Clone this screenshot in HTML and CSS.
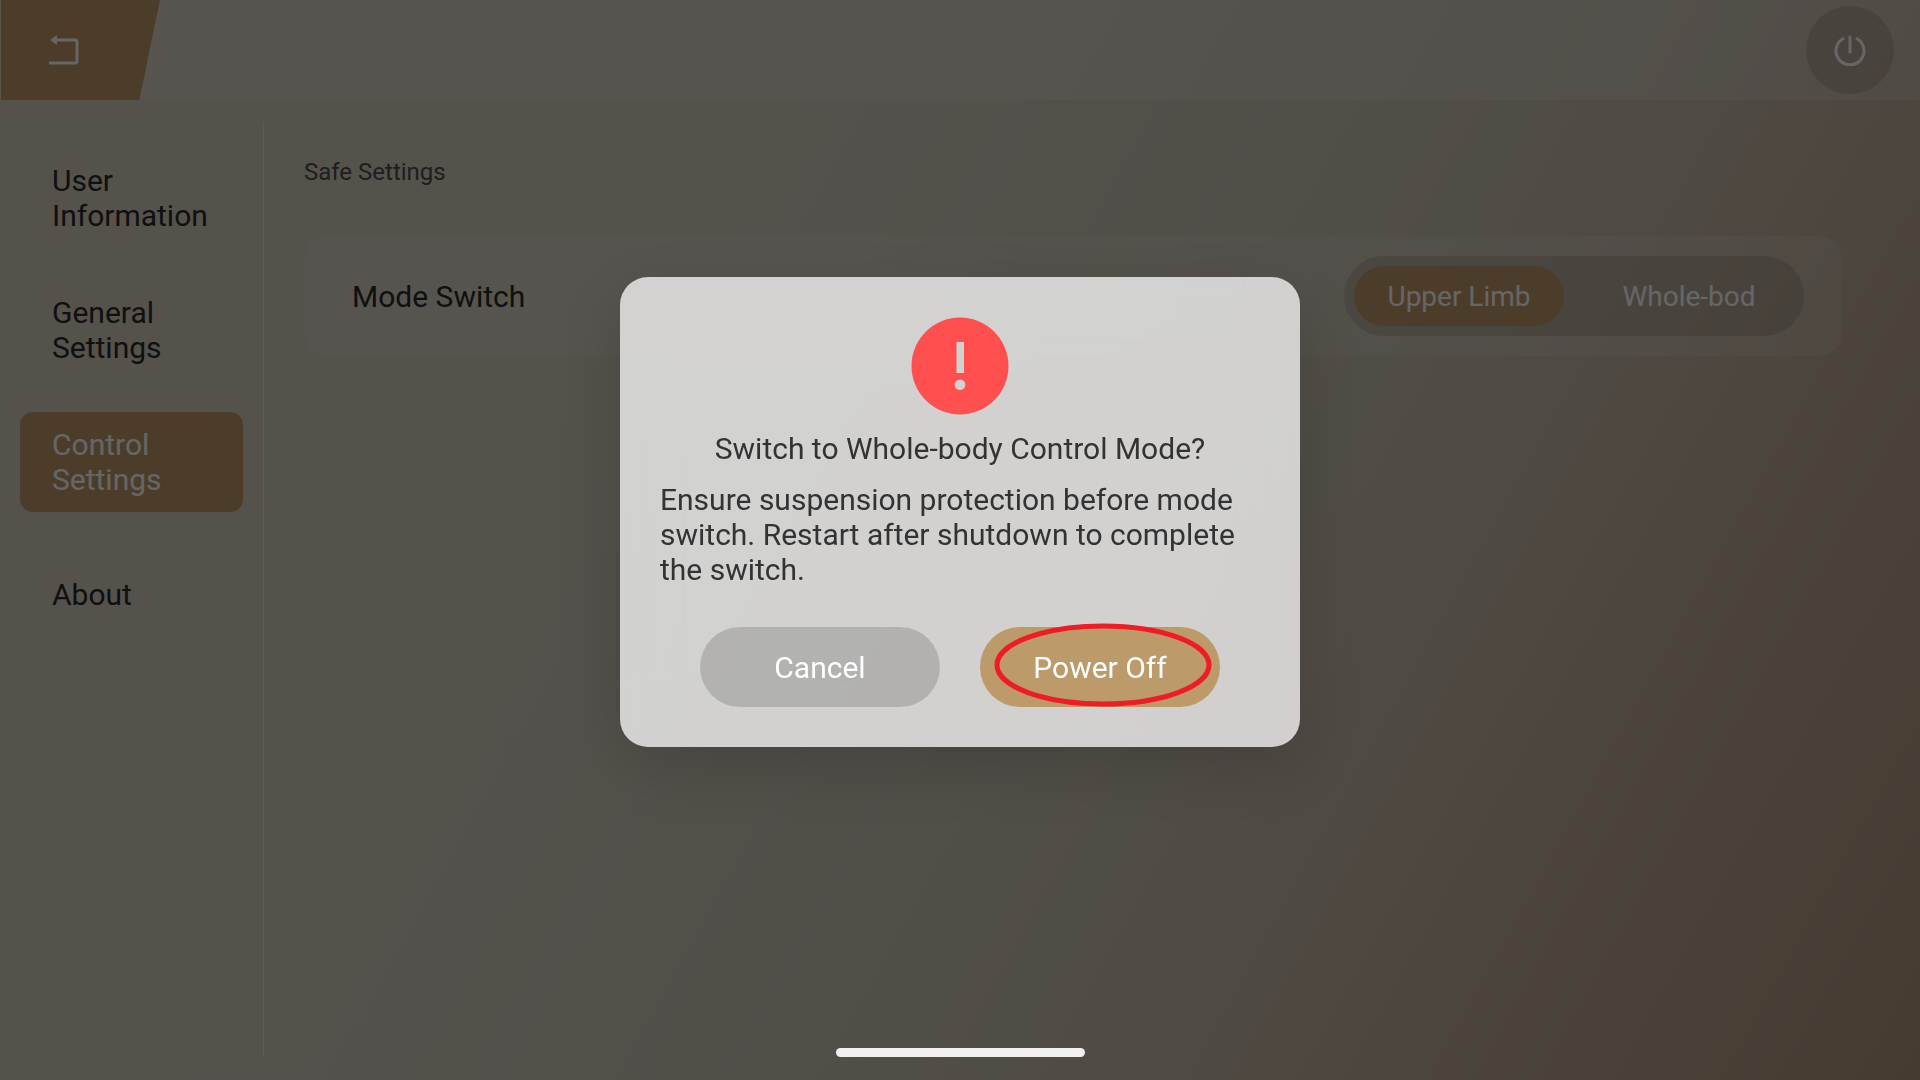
FILE: index.html
```html
<!DOCTYPE html>
<html lang="en">
<head>
<meta charset="utf-8">
<meta name="viewport" content="width=device-width, initial-scale=1">
<title>Control Settings</title>
<link rel="stylesheet" href="styles.css">
</head>
<body>
<div class="app">
  <header class="topbar">
    <button class="back" type="button" aria-label="Back">
      <svg class="back-icon" viewBox="0 0 32 32" aria-hidden="true">
        <path d="M6 6H27Q29 6 29 8V27Q29 29 27 29H1" fill="none" stroke="currentColor" stroke-width="3"/>
        <path d="M2 6L9 1V11Z" fill="currentColor"/>
      </svg>
    </button>
    <button class="power" type="button" aria-label="Power">
      <svg class="power-icon" viewBox="0 0 32 32" aria-hidden="true">
        <path d="M9 4.700A14 14 0 1 0 23 4.700M16 3V18" fill="none" stroke="currentColor" stroke-width="3" stroke-linecap="round"/>
      </svg>
    </button>
  </header>
  <div class="body">
    <nav class="sidebar">
      <a class="nav-item" href="#user">User Information</a>
      <a class="nav-item" href="#general">General Settings</a>
      <a class="nav-item active" href="#control" aria-current="page">Control Settings</a>
      <a class="nav-item" href="#about">About</a>
    </nav>
    <main class="content">
      <h1 class="section-title">Safe Settings</h1>
      <section class="card">
        <h2 class="card-label" id="mode-label">Mode Switch</h2>
        <div class="switch" role="radiogroup" aria-labelledby="mode-label">
          <label class="option"><input class="option-input" type="radio" name="mode" checked><span class="option-text">Upper Limb</span></label>
          <label class="option"><input class="option-input" type="radio" name="mode"><span class="option-text">Whole-bod</span></label>
        </div>
      </section>
    </main>
  </div>
</div>
<div class="overlay">
  <div class="dialog" role="alertdialog" aria-modal="true" aria-labelledby="dialog-title" aria-describedby="dialog-text">
    <svg class="alert-icon" viewBox="0 0 98 98" aria-hidden="true">
      <path fill="#ff4f4e" fill-rule="evenodd" d="M49 0.500a48.500 48.500 0 1 0 0 97a48.500 48.500 0 1 0 0-97ZM45.500 25H53V56H45.500ZM49 62.500a5.300 5.300 0 1 1 0 10.600a5.300 5.300 0 1 1 0-10.600Z"/>
    </svg>
    <h2 class="dialog-title" id="dialog-title">Switch to Whole-body Control Mode?</h2>
    <p class="dialog-text" id="dialog-text">Ensure suspension protection before mode switch. Restart after shutdown to complete the switch.</p>
    <div class="actions">
      <button class="btn" type="button">Cancel</button>
      <button class="btn primary" type="button">Power Off
        <svg class="mark" viewBox="0 0 218 84" aria-hidden="true">
          <ellipse cx="109" cy="42" rx="106" ry="39" fill="none" stroke="#ee1c25" stroke-width="5"/>
        </svg>
      </button>
    </div>
  </div>
  <div class="home-bar"></div>
</div>
</body>
</html>
```
FILE: styles.css
```css
* { box-sizing: border-box; }

body {
  margin: 0;
  font-family: Roboto, "Liberation Sans", sans-serif;
  font-size: 30px;
  line-height: 35px;
  color: #292929;
}

h1, h2, p { margin: 0; font-size: 30px; font-weight: 400; }

button { border: 0; padding: 0; font: inherit; cursor: pointer; }

.app {
  display: flex;
  flex-direction: column;
  min-height: 100vh;
  background: linear-gradient(119deg, #d4cdbc 0%, #d2cbbd 40%, #cbc2b3 58%, #c6b9a9 70%, #b9a58e 86%, #ab967b 100%);
}

.topbar {
  display: flex;
  align-items: center;
  justify-content: space-between;
  height: 100px;
  padding: 0 26px 0 1px;
  background: rgba(255, 255, 255, 0.15);
}

.back {
  display: flex;
  align-items: center;
  width: 159px;
  height: 100px;
  padding-left: 47px;
  background: #bf986b;
  color: #fff;
  clip-path: polygon(0 0, 100% 0, 87% 100%, 0 100%);
}

.back-icon, .power-icon { width: 32px; height: 32px; }

.power {
  display: grid;
  place-items: center;
  width: 88px;
  height: 88px;
  border-radius: 50%;
  background: rgba(30, 24, 0, 0.13);
  color: #fff;
}

.body { display: flex; flex: 1; padding: 22px 0 24px; }

.sidebar {
  display: flex;
  flex-direction: column;
  gap: 32px;
  width: 264px;
  padding: 26px 20px;
  border-right: 1px solid #e6e3dc;
}

.nav-item {
  display: flex;
  align-items: center;
  height: 100px;
  padding: 0 32px;
  border-radius: 13px;
  color: inherit;
  text-decoration: none;
}

.nav-item.active { background: #bf986b; color: #fff; }

.content { flex: 1; padding: 33px 78px 0 40px; }

.section-title { font-size: 24px; color: #4c4c4c; }

.card {
  display: flex;
  align-items: center;
  justify-content: space-between;
  height: 120px;
  margin-top: 46px;
  padding: 0 38px 0 48px;
  border-radius: 24px;
  background: rgba(255, 255, 255, 0.12);
}

.switch {
  display: flex;
  gap: 20px;
  padding: 10px;
  border-radius: 40px;
  background: rgba(30, 24, 0, 0.13);
}

.option { position: relative; width: 210px; height: 60px; font-size: 28px; color: #fff; }

.option-input { position: absolute; inset: 0; margin: 0; opacity: 0; }

.option-text { display: grid; place-items: center; height: 100%; border-radius: 30px; }

.option-input:checked + .option-text { background: #bf986b; }

.overlay {
  position: fixed;
  inset: 0;
  display: grid;
  grid-template-rows: 1fr 56px;
  justify-items: center;
  align-items: center;
  background: rgba(0, 0, 0, 0.6);
}

.dialog {
  display: flex;
  flex-direction: column;
  align-items: center;
  gap: 16px;
  width: 680px;
  max-width: 100%;
  padding: 40px;
  border-radius: 28px;
  background: rgba(255, 255, 255, 0.74);
  backdrop-filter: blur(30px);
  box-shadow: 0 20px 60px rgba(0, 0, 0, 0.14);
  color: #333;
}

.alert-icon { width: 98px; height: 98px; }

.dialog-text { align-self: stretch; }

.actions { display: flex; gap: 40px; margin-top: 24px; }

.btn {
  position: relative;
  width: 240px;
  height: 80px;
  border-radius: 40px;
  background: rgba(0, 0, 0, 0.15);
  color: #fff;
}

.btn.primary { background: #bd9a69; }

/* Hand-drawn ring that calls out the confirm button. */
.mark { position: absolute; left: 14px; top: -4px; width: 218px; height: 84px; }

.home-bar { width: 249px; height: 9px; border-radius: 5px; background: #f1f0ef; align-self: start; margin-top: 24px; }
```
